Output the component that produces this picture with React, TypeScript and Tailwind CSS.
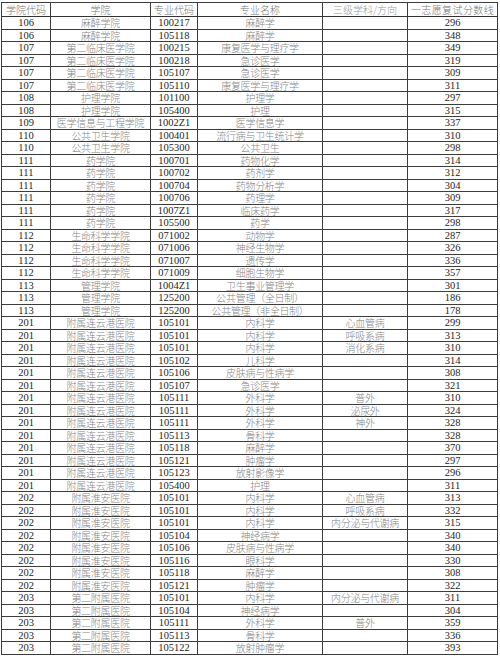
import React from "react";

type Row = [string, string, string, string, string, string];

const rows: Row[] = [
  ["106", "麻醉学院", "100217", "麻醉学", "", "296"],
  ["106", "麻醉学院", "105118", "麻醉学", "", "348"],
  ["107", "第二临床医学院", "100215", "康复医学与理疗学", "", "349"],
  ["107", "第二临床医学院", "100218", "急诊医学", "", "319"],
  ["107", "第二临床医学院", "105107", "急诊医学", "", "309"],
  ["107", "第二临床医学院", "105110", "康复医学与理疗学", "", "311"],
  ["108", "护理学院", "101100", "护理学", "", "297"],
  ["108", "护理学院", "105400", "护理", "", "315"],
  ["109", "医学信息与工程学院", "1002Z1", "医学信息学", "", "337"],
  ["110", "公共卫生学院", "100401", "流行病与卫生统计学", "", "310"],
  ["110", "公共卫生学院", "105300", "公共卫生", "", "298"],
  ["111", "药学院", "100701", "药物化学", "", "314"],
  ["111", "药学院", "100702", "药剂学", "", "312"],
  ["111", "药学院", "100704", "药物分析学", "", "304"],
  ["111", "药学院", "100706", "药理学", "", "309"],
  ["111", "药学院", "1007Z1", "临床药学", "", "317"],
  ["111", "药学院", "105500", "药学", "", "298"],
  ["112", "生命科学学院", "071002", "动物学", "", "287"],
  ["112", "生命科学学院", "071006", "神经生物学", "", "326"],
  ["112", "生命科学学院", "071007", "遗传学", "", "336"],
  ["112", "生命科学学院", "071009", "细胞生物学", "", "357"],
  ["113", "管理学院", "1004Z1", "卫生事业管理学", "", "301"],
  ["113", "管理学院", "125200", "公共管理（全日制）", "", "186"],
  ["113", "管理学院", "125200", "公共管理（非全日制）", "", "178"],
  ["201", "附属连云港医院", "105101", "内科学", "心血管病", "299"],
  ["201", "附属连云港医院", "105101", "内科学", "呼吸系病", "313"],
  ["201", "附属连云港医院", "105101", "内科学", "消化系病", "310"],
  ["201", "附属连云港医院", "105102", "儿科学", "", "314"],
  ["201", "附属连云港医院", "105106", "皮肤病与性病学", "", "308"],
  ["201", "附属连云港医院", "105107", "急诊医学", "", "321"],
  ["201", "附属连云港医院", "105111", "外科学", "普外", "310"],
  ["201", "附属连云港医院", "105111", "外科学", "泌尿外", "324"],
  ["201", "附属连云港医院", "105111", "外科学", "神外", "328"],
  ["201", "附属连云港医院", "105113", "骨科学", "", "328"],
  ["201", "附属连云港医院", "105118", "麻醉学", "", "370"],
  ["201", "附属连云港医院", "105121", "肿瘤学", "", "297"],
  ["201", "附属连云港医院", "105123", "放射影像学", "", "296"],
  ["201", "附属连云港医院", "105400", "护理", "", "311"],
  ["202", "附属淮安医院", "105101", "内科学", "心血管病", "313"],
  ["202", "附属淮安医院", "105101", "内科学", "呼吸系病", "332"],
  ["202", "附属淮安医院", "105101", "内科学", "内分泌与代谢病", "315"],
  ["202", "附属淮安医院", "105104", "神经病学", "", "340"],
  ["202", "附属淮安医院", "105106", "皮肤病与性病学", "", "340"],
  ["202", "附属淮安医院", "105116", "眼科学", "", "330"],
  ["202", "附属淮安医院", "105118", "麻醉学", "", "308"],
  ["202", "附属淮安医院", "105121", "肿瘤学", "", "322"],
  ["203", "第二附属医院", "105101", "内科学", "内分泌与代谢病", "311"],
  ["203", "第二附属医院", "105104", "神经病学", "", "304"],
  ["203", "第二附属医院", "105111", "外科学", "普外", "359"],
  ["203", "第二附属医院", "105113", "骨科学", "", "336"],
  ["203", "第二附属医院", "105122", "放射肿瘤学", "", "393"],
];

const gridCols = "grid grid-cols-[49px_100px_47px_125px_85px_90px]";
const cellBase =
  "flex items-center justify-center border-r border-[#3c3c3c] whitespace-nowrap";
const numCls = `${cellBase} text-[10.5px] leading-[11px] text-[#262626] font-['Liberation_Serif','Times_New_Roman',serif]`;
const cjkCls = `${cellBase} text-[10px] leading-[11px] text-[#858585] font-['Noto_Sans_CJK_SC','Noto_Sans',sans-serif] font-light tracking-[-0.3px]`;

export default function App() {
  const headers = ["学院代码", "学院", "专业代码", "专业名称", "三级学科/方向", "一志愿复试分数线"];
  return (
    <div className="w-[500px] h-[658px] bg-white pt-[2px] pl-[1px]">
      <div className="w-[497px] border-l border-t border-[#3c3c3c]">
        <div className={`${gridCols} h-[14px] border-b-[1.5px] border-[#333333]`}>
          {headers.map((h, i) => (
            <div
              key={i}
              className={`${cellBase} text-[10px] leading-[11px] ${i === 4 ? "text-[#9a9a9a]" : "text-[#767676]"} font-['Noto_Sans_CJK_SC','Noto_Sans',sans-serif] font-light ${i === 5 ? "tracking-[0.4px]" : ""}`}
            >
              {h}
            </div>
          ))}
        </div>
        {rows.map((r, idx) => (
          <div
            key={idx}
            className={`${gridCols} h-[12.5px] border-b border-[#3c3c3c]`}
          >
            <div className={numCls}>{r[0]}</div>
            <div className={cjkCls}>{r[1]}</div>
            <div className={numCls}>{r[2]}</div>
            <div className={cjkCls}>{r[3]}</div>
            <div className={cjkCls}>{r[4]}</div>
            <div className={numCls}>{r[5]}</div>
          </div>
        ))}
      </div>
    </div>
  );
}
